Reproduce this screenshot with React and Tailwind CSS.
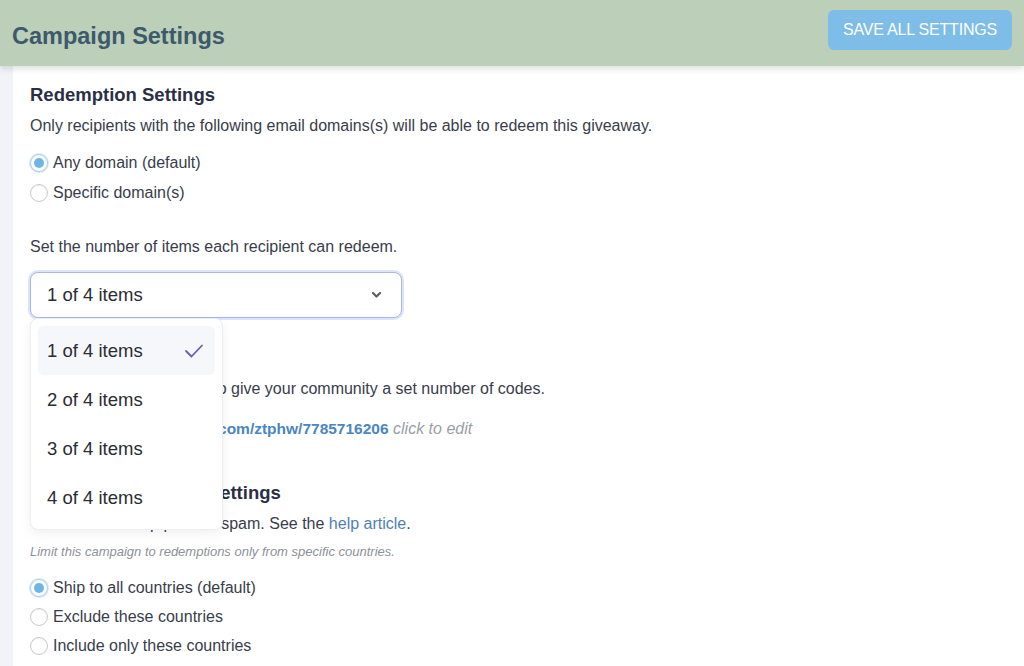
import React from "react";

function Radio({ checked, label }) {
  return (
    <label className="flex items-center gap-[5px] h-6">
      <span
        className={
          checked
            ? "w-[18px] h-[18px] rounded-full border border-[#a9cfee] bg-white flex items-center justify-center shadow-[0_0_0_1px_#d6e9f7]"
            : "w-[18px] h-[18px] rounded-full border border-[#c9c9c9] bg-white shadow-[inset_0_1px_1px_rgba(0,0,0,0.05)]"
        }
      >
        {checked && <span className="w-[10px] h-[10px] rounded-full bg-[#6db5e6]" />}
      </span>
      <span className="text-[16px] text-[#393d4b]">{label}</span>
    </label>
  );
}

const items = ["1 of 4 items", "2 of 4 items", "3 of 4 items", "4 of 4 items"];

export default function App() {
  return (
    <div className="w-[1024px] h-[666px] overflow-hidden bg-white flex flex-col font-['Liberation_Sans',Arial,sans-serif]">
      <header className="relative z-10 h-[66px] shrink-0 bg-[#bccfb8] flex items-center justify-between pl-3 pr-3 shadow-[0_3px_6px_rgba(0,0,0,0.12)]">
        <h1 className="text-[23.5px] font-bold text-[#3d5a6c] mt-[7px]">Campaign Settings</h1>
        <button className="self-start mt-[10px] h-[40px] w-[184px] rounded-[6px] bg-[#7dbde8] text-white text-[16px] tracking-[-0.2px]">
          SAVE ALL SETTINGS
        </button>
      </header>
      <div className="flex flex-1 min-h-0">
        <div className="w-[13px] shrink-0 bg-[#f1f3f8]" />
        <main className="flex-1 pl-[17px] pt-[17px] text-[#393d4b]">
          <h2 className="text-[18.5px] leading-6 font-bold text-[#2b2f45]">Redemption Settings</h2>
          <p className="mt-[8px] text-[16px] leading-[22px]">
            Only recipients with the following email domains(s) will be able to redeem this giveaway.
          </p>
          <div className="mt-[14px] flex flex-col gap-[6px]">
            <Radio checked label="Any domain (default)" />
            <Radio label="Specific domain(s)" />
          </div>
          <p className="mt-[31px] text-[16px] leading-[22px]">Set the number of items each recipient can redeem.</p>

          <div className="relative mt-[14px] w-[372px]">
            <div className="h-[46px] rounded-[8px] border border-[#a8b8ec] shadow-[0_0_0_2px_#dde4fa] bg-white flex items-center justify-between pl-[16px] pr-[19px]">
              <span className="text-[18.5px] text-[#2a2c33]">1 of 4 items</span>
              <svg width="11" height="8" viewBox="0 0 11 8" fill="none">
                <path d="M2 2l3.5 3.5L9 2" stroke="#5a5d66" strokeWidth="2.2" strokeLinecap="round" strokeLinejoin="round" />
              </svg>
            </div>
            <div className="absolute left-0 top-[46px] z-20 w-[193px] rounded-[8px] bg-white border border-[#eceef2] shadow-[0_4px_12px_rgba(0,0,0,0.06)] p-[7px] flex flex-col">
              {items.map((it, i) => (
                <div
                  key={it}
                  className={
                    i === 0
                      ? "h-[49px] rounded-[6px] bg-[#f6f7fa] flex items-center justify-between pl-[9px] pr-[11px]"
                      : "h-[49px] flex items-center pl-[9px]"
                  }
                >
                  <span className="text-[18.5px] text-[#2a2c33]">{it}</span>
                  {i === 0 && (
                    <svg width="20" height="16" viewBox="0 0 20 16" fill="none">
                      <path d="M2 8l5.5 5.5L18 2.5" stroke="#6a5cc0" strokeWidth="1.8" strokeLinecap="round" strokeLinejoin="round" />
                    </svg>
                  )}
                </div>
              ))}
            </div>
          </div>

          <h3 className="mt-[20px] text-[18.5px] leading-6 font-bold text-[#2b2f45]">Codes</h3>
          <p className="mt-[16px] text-[16px] leading-[22px]">
            Enable a unique code list to give your community a set number of codes.
          </p>
          <p className="mt-[18px] text-[16px] leading-[22px]">
            <span className="font-bold text-[15.5px] text-[#4a86c0]">Link: http://i.redeem-now.com/ztphw/7785716206</span>{" "}
            <span className="italic text-[#9a9ea6]">click to edit</span>
          </p>
          <h2 className="mt-[41px] text-[18.5px] leading-6 font-bold text-[#2b2f45]">Country Restriction Settings</h2>
          <p className="mt-[8px] text-[16px] leading-[22px]">
            This can also help prevent spam. See the <span className="text-[#4f80b8]">help article</span>.
          </p>
          <p className="mt-[9px] text-[13px] leading-[16px] italic text-[#8d9199]">
            Limit this campaign to redemptions only from specific countries.
          </p>
          <div className="mt-[16px] flex flex-col gap-[5px]">
            <Radio checked label="Ship to all countries (default)" />
            <Radio label="Exclude these countries" />
            <Radio label="Include only these countries" />
          </div>
        </main>
      </div>
    </div>
  );
}
